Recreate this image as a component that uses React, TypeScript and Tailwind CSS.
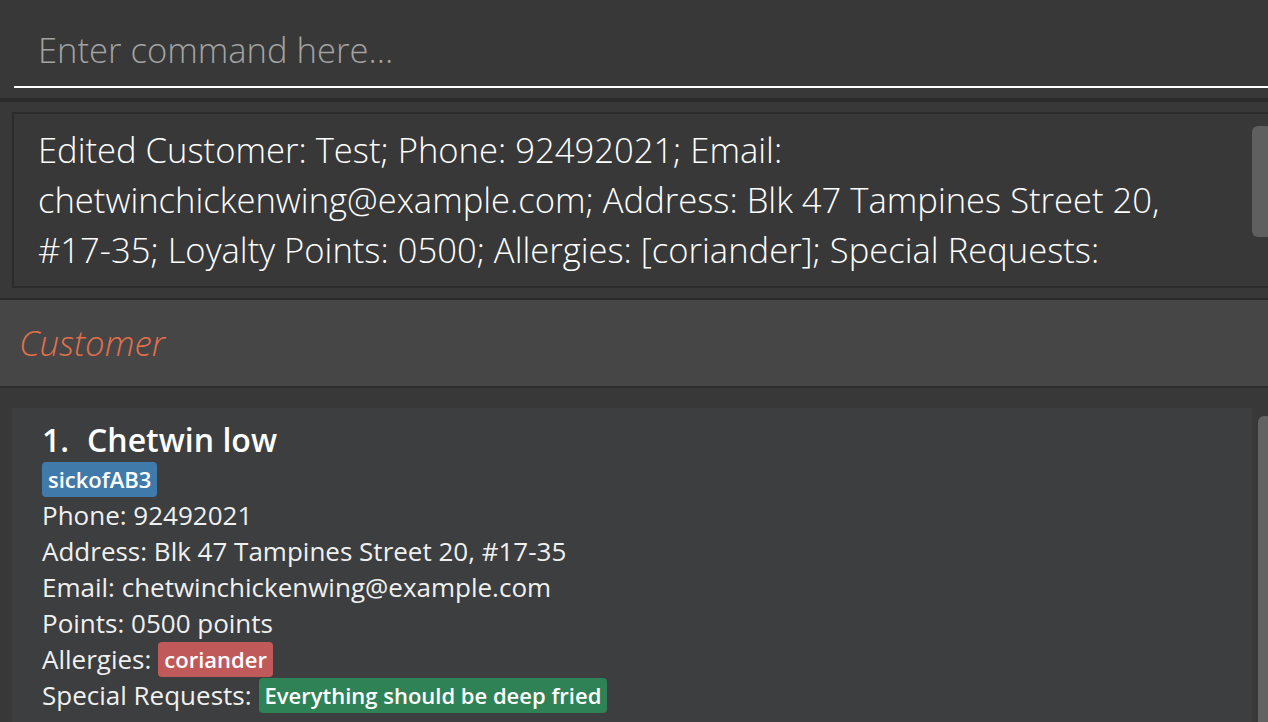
import React from "react";

const resultLines = [
  "Edited Customer: Test; Phone: 92492021; Email:",
  "chetwinchickenwing@example.com; Address: Blk 47 Tampines Street 20,",
  "#17-35; Loyalty Points: 0500; Allergies: [coriander]; Special Requests:",
];

const Tag = ({ label, color }: { label: string; color: string }) => (
  <span className={`inline-block rounded-[4px] px-[6px] py-[2px] text-[22px] leading-[31px] font-semibold text-white ${color}`}>
    {label}
  </span>
);

export default function App() {
  return (
    <div className="h-[722px] w-[1268px] overflow-hidden bg-[#383838] flex flex-col font-['Open_Sans',sans-serif]">
      {/* Command box */}
      <div className="h-[98px] pt-3 pl-[14px] shrink-0">
        <input
          className="w-full h-[76px] bg-[#383838] border-b-2 border-white pl-6 text-[34.6px] font-light text-white placeholder:text-[#a3a3a3] outline-none"
          placeholder="Enter command here..."
        />
      </div>
      <div className="h-1 bg-[#2b2b2b] shrink-0" />

      {/* Result display */}
      <div className="pt-[10px] pb-[10px] pl-3 shrink-0">
        <div className="w-[1262px] h-[176px] border-2 border-[#2b2b2b] flex overflow-hidden">
          <div className="flex-1 pl-6 pt-[11px] text-[34.6px] leading-[50px] font-light text-white">
            {resultLines.map((line) => (
              <div key={line} className="whitespace-nowrap">{line}</div>
            ))}
          </div>
          <div className="w-5 pt-3 shrink-0">
            <div className="h-[111px] w-full rounded-[6px] bg-[#5f5f5f]" />
          </div>
        </div>
      </div>
      <div className="h-[2px] bg-[#2b2b2b] shrink-0" />

      {/* Panel header */}
      <div className="h-[86px] bg-[#464646] flex items-center pl-[19px] shrink-0">
        <span className="text-[34.8px] font-light italic text-[#e2704c]">Customer</span>
      </div>
      <div className="h-[2px] bg-[#2e2e2e] shrink-0" />

      {/* Customer list */}
      <div className="flex gap-[6px] pt-5 pl-3 flex-1 min-h-0">
        <div className="w-[1240px] shrink-0 bg-[#3c3e3f] pl-[30px] pt-3 text-[#f0f0f0]">
          <div className="flex gap-[18px] text-[32px] leading-[40px] font-semibold text-white">
            <span>1.</span>
            <span>Chetwin low</span>
          </div>
          <div className="mt-[2px] flex">
            <Tag label="sickofAB3" color="bg-[#3f7aab]" />
          </div>
          <div className="text-[26px] leading-[36px]">
            <div>Phone: 92492021</div>
            <div>Address: Blk 47 Tampines Street 20, #17-35</div>
            <div>Email: chetwinchickenwing@example.com</div>
            <div>Points: 0500 points</div>
            <div className="flex items-center gap-[7px]">
              <span>Allergies:</span>
              <Tag label="coriander" color="bg-[#c05a5a]" />
            </div>
            <div className="flex items-center gap-[7px]">
              <span>Special Requests:</span>
              <Tag label="Everything should be deep fried" color="bg-[#2e8256]" />
            </div>
          </div>
        </div>
        <div className="w-[14px] pt-2 shrink-0">
          <div className="h-[400px] w-full rounded-t-[6px] bg-[#626262]" />
        </div>
      </div>
    </div>
  );
}
